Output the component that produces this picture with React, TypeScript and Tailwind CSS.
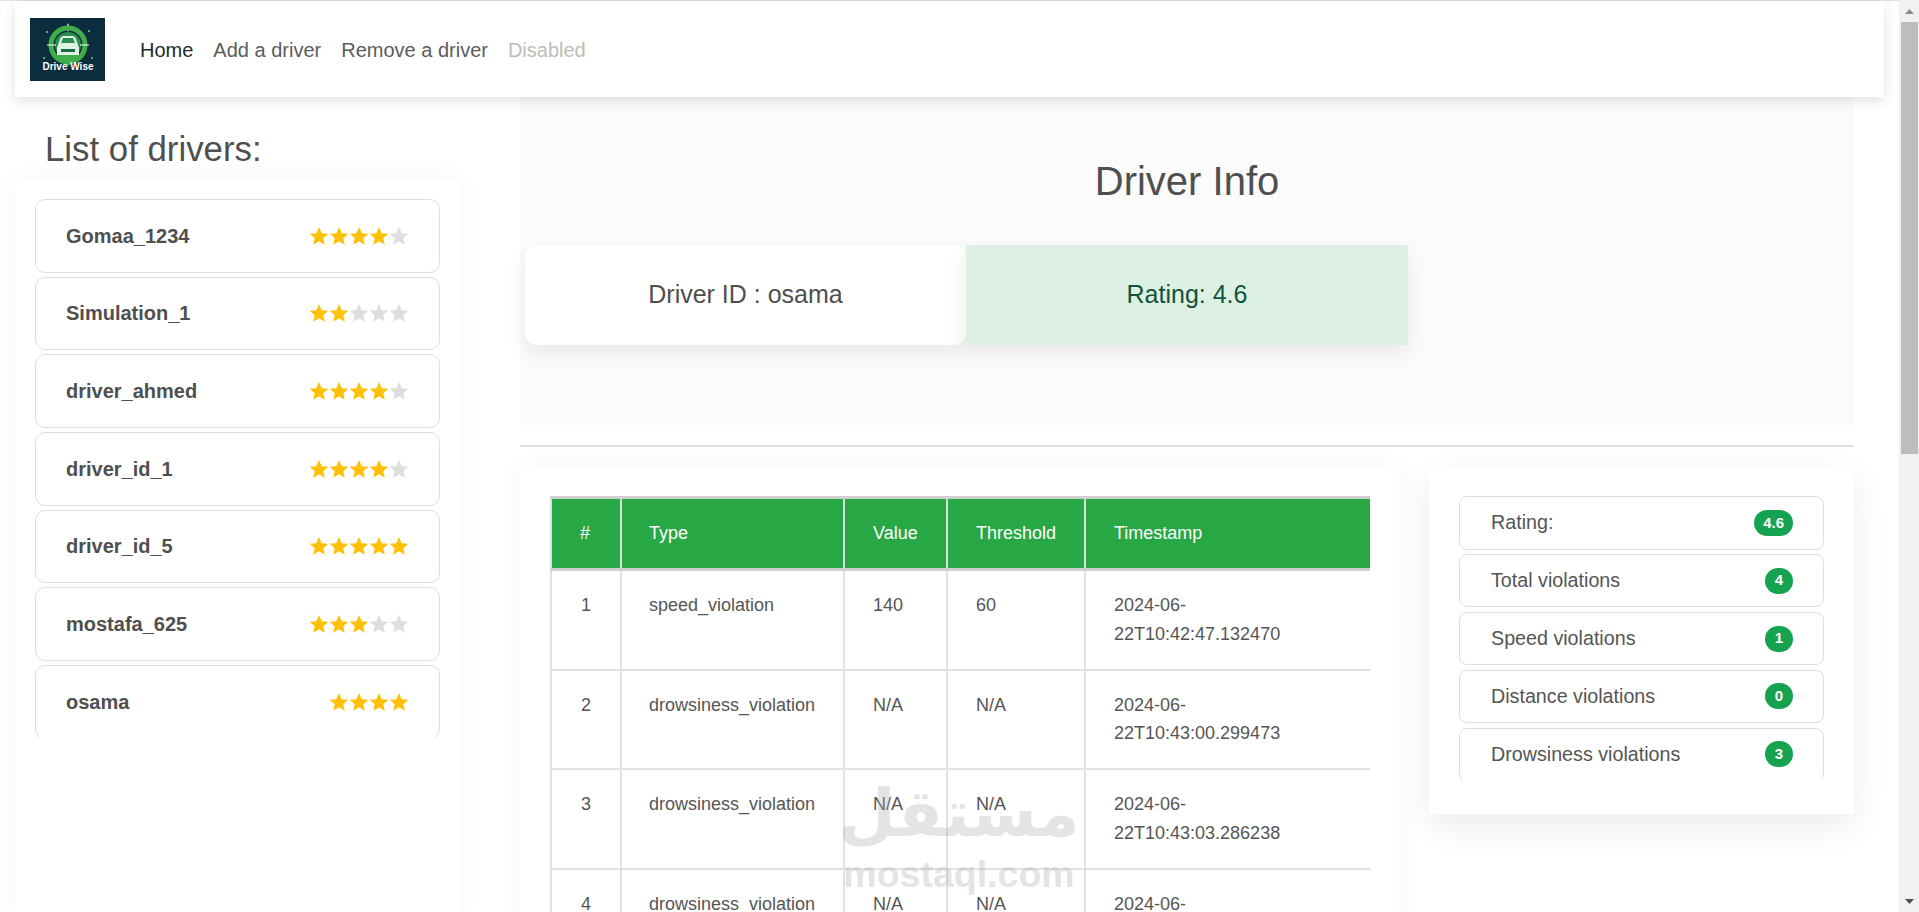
const drivers = [
  { name: "Gomaa_1234", filled: 4, empty: 1 },
  { name: "Simulation_1", filled: 2, empty: 3 },
  { name: "driver_ahmed", filled: 4, empty: 1 },
  { name: "driver_id_1", filled: 4, empty: 1 },
  { name: "driver_id_5", filled: 5, empty: 0 },
  { name: "mostafa_625", filled: 3, empty: 2 },
  { name: "osama", filled: 4, empty: 0 },
];

const violations = [
  { id: 1, type: "speed_violation", value: "140", threshold: "60", time: "2024-06-22T10:42:47.132470" },
  { id: 2, type: "drowsiness_violation", value: "N/A", threshold: "N/A", time: "2024-06-22T10:43:00.299473" },
  { id: 3, type: "drowsiness_violation", value: "N/A", threshold: "N/A", time: "2024-06-22T10:43:03.286238" },
  { id: 4, type: "drowsiness_violation", value: "N/A", threshold: "N/A", time: "2024-06-22T10:43:05.412907" },
];

const stats = [
  { label: "Rating:", value: "4.6" },
  { label: "Total violations", value: "4" },
  { label: "Speed violations", value: "1" },
  { label: "Distance violations", value: "0" },
  { label: "Drowsiness violations", value: "3" },
];

function Star({ on }: { on: boolean }) {
  return (
    <svg width="20" height="18" viewBox="0 0 20 18" className={on ? "fill-[#ffc107]" : "fill-[#dedede]"}>
      <path d="M10 0l2.7 6.2 6.6.6-5 4.4 1.5 6.6L10 14.3l-5.8 3.5 1.5-6.6-5-4.4 6.6-.6z" />
    </svg>
  );
}

function Logo() {
  return (
    <svg width="75" height="63" viewBox="0 0 75 63" className="shrink-0 bg-[#0b2d3e]">
      <path d="M38 5l1.2 3.3 3.3 1.2-3.3 1.2L38 14l-1.2-3.3-3.3-1.2 3.3-1.2z" fill="#fff" />
      <circle cx="38" cy="27" r="17" fill="none" stroke="#3fae49" strokeWidth="5" />
      <circle cx="38" cy="27" r="13" fill="#2a8f4d" />
      <path d="M24 38l14 10 14-10-6-4H30z" fill="#3fae49" />
      <path d="M27 30l3-9q1-3 4-3h8q3 0 4 3l3 9v7H27z" fill="#dff3e4" />
      <path d="M31 25l2-5h10l2 5z" fill="#2a8f4d" />
      <rect x="31" y="31" width="14" height="3" fill="#1d6b3d" />
      <path d="M17 27h9M50 27h9" stroke="#fff" strokeWidth="1.2" />
      <circle cx="17" cy="14" r="1" fill="#7fd08a" />
      <circle cx="59" cy="13" r="1" fill="#7fd08a" />
      <circle cx="14" cy="40" r="1" fill="#7fd08a" />
      <circle cx="62" cy="40" r="1" fill="#7fd08a" />
      <text x="38" y="52" textAnchor="middle" fill="#fff" fontSize="10" fontWeight="700" fontFamily="'Liberation Sans', sans-serif">Drive Wise</text>
    </svg>
  );
}

function Navbar() {
  return (
    <nav className="relative z-10 mx-[15px] flex h-[96px] items-center bg-white pl-[15px] shadow-[0_4px_12px_rgba(0,0,0,0.12)]">
      <Logo />
      <div className="ml-[25px] flex pt-[2px] text-[20px]">
        <a className="px-[10px] text-[#1f2a2e]">Home</a>
        <a className="px-[10px] text-[#5c5c5c]">Add a driver</a>
        <a className="px-[10px] text-[#5c5c5c]">Remove a driver</a>
        <a className="px-[10px] text-[#bdbdb5]">Disabled</a>
      </div>
    </nav>
  );
}

function DriverList() {
  return (
    <aside className="ml-[15px] flex w-[445px] shrink-0 flex-col">
      <h2 className="ml-[30px] mt-[30px] h-[52px] text-[34.8px] leading-[43px] text-[#4f4f4f]">List of drivers:</h2>
      <div className="flex-1 bg-white px-[20px] pt-[20px] shadow-[0_0_24px_rgba(0,0,0,0.04)]">
        <ul className="flex h-[538px] flex-col gap-[4px] overflow-hidden">
          {drivers.map((d) => (
            <li key={d.name} className="flex h-[73.67px] shrink-0 items-center justify-between rounded-[10px] border border-[#dedede] pl-[30px] pr-[30px]">
              <span className="text-[20px] font-bold text-[#4f4f4f]">{d.name}</span>
              <span className="flex">
                {Array.from({ length: d.filled }).map((_, i) => <Star key={i} on />)}
                {Array.from({ length: d.empty }).map((_, i) => <Star key={i} on={false} />)}
              </span>
            </li>
          ))}
        </ul>
      </div>
    </aside>
  );
}

function DriverInfo() {
  return (
    <section className="h-[328px] bg-[#fbfbfb] pl-[5px]">
      <h1 className="pr-[5px] pt-[60px] text-center text-[40px] leading-[48px] text-[#4f4f4f]">Driver Info</h1>
      <div className="mt-[40px] flex">
        <div className="flex h-[100px] w-[441px] items-center justify-center rounded-[12px] bg-white text-[25px] text-[#4f4f4f] shadow-[0_8px_20px_rgba(0,0,0,0.08)]">
          Driver ID : osama
        </div>
        <div className="flex h-[100px] w-[442px] items-center justify-center bg-[#ddf0e4] text-[25px] text-[#14533c] shadow-[0_8px_20px_rgba(0,0,0,0.08)]">
          Rating: 4.6
        </div>
      </div>
    </section>
  );
}

function ViolationsTable() {
  const th = "border-x-2 border-[#dedede] px-[28px] text-left text-[18px] font-normal text-white";
  const td = "border-x-2 border-[#e2e2e2] px-[28px] py-[20px] align-top text-[18px] leading-[28.8px] text-[#555]";
  return (
    <div className="w-[879px] shrink-0 bg-white p-[30px] shadow-[0_0_24px_rgba(0,0,0,0.04)]">
      <table className="w-[819px] table-fixed border-collapse">
        <colgroup>
          <col className="w-[70px]" />
          <col className="w-[223px]" />
          <col className="w-[103px]" />
          <col className="w-[138px]" />
          <col className="w-[285px]" />
        </colgroup>
        <thead>
          <tr className="h-[72px] border-y-[3px] border-[#cfcfcf] bg-[#28a745]">
            <th className={th + " text-center"}>#</th>
            <th className={th + " pl-[27px]"}>Type</th>
            <th className={th}>Value</th>
            <th className={th}>Threshold</th>
            <th className={th + " border-r-0"}>Timestamp</th>
          </tr>
        </thead>
        <tbody>
          {violations.map((v) => (
            <tr key={v.id} className="border-b-2 border-[#e2e2e2]">
              <td className={td + " text-center"}>{v.id}</td>
              <td className={td + " pl-[27px]"}>{v.type}</td>
              <td className={td}>{v.value}</td>
              <td className={td}>{v.threshold}</td>
              <td className={td + " border-r-0"}>{v.time}</td>
            </tr>
          ))}
        </tbody>
      </table>
    </div>
  );
}

function StatsCard() {
  return (
    <div className="h-[348px] w-[425px] shrink-0 bg-white px-[30px] pt-[30px] shadow-[0_12px_32px_rgba(0,0,0,0.08)]">
      <ul className="flex h-[283px] flex-col gap-[4.3px] overflow-hidden">
        {stats.map((s) => (
          <li key={s.label} className="flex h-[53.6px] shrink-0 items-center justify-between rounded-[8px] border border-[#dedede] pl-[31px] pr-[30px]">
            <span className="text-[19.7px] text-[#555]">{s.label}</span>
            <span className="flex h-[26px] min-w-[28px] items-center justify-center rounded-full bg-[#16a34f] px-[9px] text-[15px] font-bold text-white">
              {s.value}
            </span>
          </li>
        ))}
      </ul>
    </div>
  );
}

function Watermark() {
  return (
    <div className="pointer-events-none absolute left-[843px] top-[772px] z-20 flex w-[232px] flex-col items-center text-[#a8a8a8] opacity-30">
      <span className="text-[66px] font-bold leading-[84px]" style={{ fontFamily: "'DejaVu Sans', sans-serif" }}>مستقل</span>
      <span className="text-[37.5px] font-bold leading-[36px]">mostaql.com</span>
    </div>
  );
}

function Scrollbar() {
  return (
    <div className="flex h-full w-[20px] shrink-0 flex-col bg-[#f1f1f1] pl-[2px] pr-px">
      <div className="flex h-[22px] items-center justify-center">
        <svg width="9" height="5" viewBox="0 0 9 5" className="fill-[#8a8a8a]"><path d="M4.5 0L9 5H0z" /></svg>
      </div>
      <div className="h-[432px] bg-[#bdbdbd]" />
      <div className="mt-auto flex h-[22px] items-center justify-center">
        <svg width="9" height="5" viewBox="0 0 9 5" className="fill-[#505050]"><path d="M0 0h9L4.5 5z" /></svg>
      </div>
    </div>
  );
}

export default function App() {
  return (
    <div className="relative flex h-[912px] overflow-hidden bg-white" style={{ fontFamily: "'Liberation Sans', Arial, sans-serif" }}>
      <div className="flex min-w-0 flex-1 flex-col border-t border-[#e0e0e0]">
        <Navbar />
        <div className="flex min-h-0 flex-1 overflow-hidden">
          <DriverList />
          <main className="ml-[60px] w-[1334px] shrink-0">
            <DriverInfo />
            <div className="mt-[20px] h-[2px] bg-[#dcdcdc]" />
            <div className="mt-[19px] flex gap-[30px]">
              <ViolationsTable />
              <StatsCard />
            </div>
          </main>
        </div>
      </div>
      <Scrollbar />
      <Watermark />
    </div>
  );
}
